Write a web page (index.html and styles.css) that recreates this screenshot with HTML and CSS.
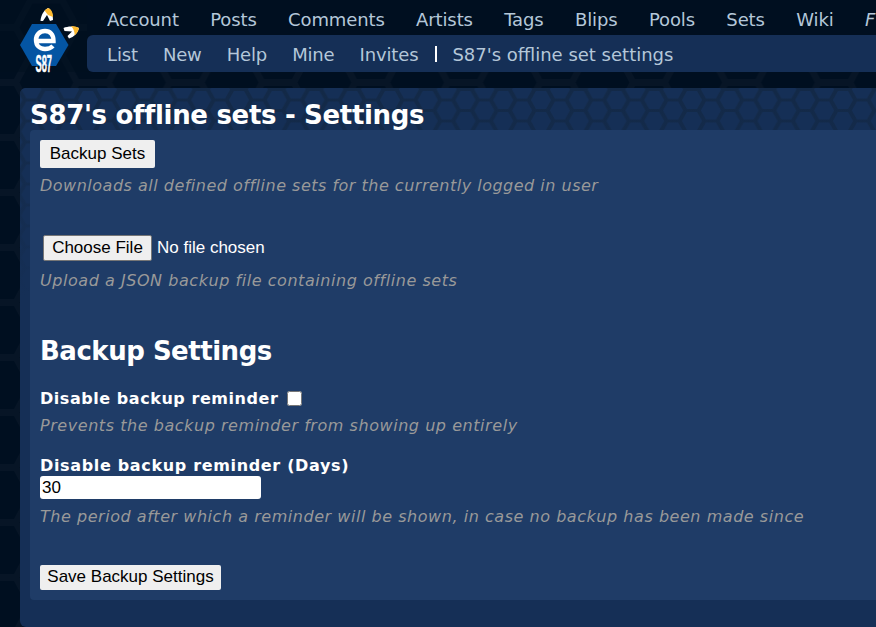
FILE: index.html
```html
<!DOCTYPE html>
<html lang="en">
<head>
<meta charset="utf-8">
<title>Set settings</title>
<link rel="stylesheet" href="styles.css">
</head>
<body>
<svg class="backdrop" width="876" height="627" aria-hidden="true">
  <defs>
    <pattern id="large" width="92.7" height="55" patternUnits="userSpaceOnUse">
      <rect width="93" height="55" fill="#071526"/>
      <g fill="#000f20">
        <path d="M-27 0L-14-24H14L27 0L14 24H-14Z"/>
        <path d="M-27 55L-14 31H14L27 55L14 79H-14ZM65.700 0L78.700-24H106.700L119.700 0L106.700 24H78.700ZM65.700 55L78.700 31H106.700L119.700 55L106.700 79H78.700Z"/>
        <path d="M19.300 27.500L32.300 3.500H60.300L73.300 27.500L60.300 51.500H32.300Z"/>
      </g>
    </pattern>
  </defs>
  <rect width="876" height="627" fill="url(#large)"/>
</svg>
<header class="top">
  <a class="logo">
    <svg width="60" height="70" viewBox="20 5 60 70">
      <path fill="#0455a3" d="M20 45L32 24H56L68.500 45L56 66H32Z"/>
      <path fill="#fff" d="M40.500 21C41 15 44 10 48 8C51 9 53 14 53 20L50 21L47 15L43 21Z"/>
      <path fill="#fdb92e" d="M44.500 10.500L48 8C51.500 9 53 13 53 17L48 15Z"/>
      <path fill="#fff" d="M63.500 28C68 26 74 26 79 28C78 33 74 37 69 38.500L67.500 36L72 31.500L64.500 31Z"/>
      <path fill="#fdb92e" d="M71 26Q76 26 79 28Q78 33 74.500 35.500Q75 30 71 26Z"/>
      <path fill="none" stroke="#fff" stroke-width="4.400" d="M36 41H53.500C53.500 34.500 50 31 45 31C39.500 31 36 35 36 40C36 45.500 39.500 49 45 49Q50 49 53 46"/>
      <text class="logo-name" x="35.500" y="71.500" textLength="16.500" lengthAdjust="spacingAndGlyphs">S87</text>
    </svg>
  </a>
  <nav class="menus">
    <div class="main-nav"><a>Account</a><a>Posts</a><a>Comments</a><a>Artists</a><a>Tags</a><a>Blips</a><a>Pools</a><a>Sets</a><a>Wiki</a><a><i>F</i></a></div>
    <div class="sub-nav"><a>List</a><a>New</a><a>Help</a><a>Mine</a><a>Invites</a><b class="divider"></b><a>S87's offline set settings</a></div>
  </nav>
</header>
<main class="page">
  <svg class="page-pattern" width="856" height="210" aria-hidden="true">
    <defs>
      <pattern id="small" width="37.75" height="21" patternUnits="userSpaceOnUse" patternTransform="translate(30.250 12)">
        <rect width="38" height="21" fill="#132947"/>
        <g fill="#152f56">
          <path d="M-10 0L-5-9H5L10 0L5 9H-5ZM-10 21L-5 12H5L10 21L5 30H-5ZM27.750 0L32.750-9H42.750L47.750 0L42.750 9H32.750ZM27.750 21L32.750 12H42.750L47.750 21L42.750 30H32.750ZM8.900 10.500L13.900 1.500H23.900L28.900 10.500L23.900 19.500H13.900Z"/>
        </g>
      </pattern>
      <linearGradient id="fade" x2="0" y2="1"><stop stop-color="#152f56" stop-opacity="0"/><stop offset="1" stop-color="#152f56"/></linearGradient>
    </defs>
    <rect width="856" height="210" fill="url(#small)"/>
    <rect width="856" height="210" fill="url(#fade)"/>
  </svg>
  <h1>S87's offline sets - Settings</h1>
  <section class="panel">
    <button class="backup">Backup Sets</button>
    <p class="hint hint-backup">Downloads all defined offline sets for the currently logged in user</p>
    <div class="upload"><button class="choose">Choose File</button><span>No file chosen</span></div>
    <p class="hint hint-upload">Upload a JSON backup file containing offline sets</p>
    <h2>Backup Settings</h2>
    <label class="check-row"><span>Disable backup reminder</span><input type="checkbox"></label>
    <p class="hint hint-check">Prevents the backup reminder from showing up entirely</p>
    <label class="days-label">Disable backup reminder (Days)</label>
    <input class="days" type="text" value="30">
    <p class="hint hint-days">The period after which a reminder will be shown, in case no backup has been made since</p>
    <button class="save">Save Backup Settings</button>
  </section>
</main>
</body>
</html>
```
FILE: styles.css
```css
* { box-sizing: border-box; }
body { margin: 0; width: 876px; height: 627px; overflow: hidden; background: #000f20; color: #fff; font-family: Verdana, "DejaVu Sans", sans-serif; font-size: 17px; }
.backdrop { position: absolute; inset: 0; z-index: -1; }
.top { display: flex; height: 72px; background: rgba(0, 15, 32, 0.45); }
.logo { width: 87px; padding: 5px 0 0 20px; flex: none; }
.logo svg { display: block; }
.logo-name { font: bold 23px "Liberation Sans", sans-serif; fill: #fff; stroke: #fff; stroke-width: 0.5px; }
.menus { width: 789px; overflow: hidden; }
.main-nav, .sub-nav { display: flex; white-space: nowrap; color: #b4c7d9; font-size: 18px; letter-spacing: -0.12px; }
.main-nav { height: 35px; background: #000f20; padding-left: 20px; gap: 31.400px; line-height: 40px; }
.sub-nav { height: 37px; background: #152f56; padding-left: 20px; gap: 25px; line-height: 39px; border-radius: 6px 0 0 6px; }
.sub-nav a:nth-child(-n+5) { letter-spacing: -0.15px; }
.sub-nav a:last-child { letter-spacing: 0; }
.divider { width: 2px; height: 16px; margin: 11px -10px 0 -8px; background: #fff; }
.page { position: relative; margin: 16px 0 0 20px; height: 539px; background: #152f56; border-radius: 6px 0 0 6px; padding: 10px 0 0 10px; overflow: hidden; }
.page-pattern { position: absolute; left: 0; top: 0; }
h1, .panel { position: relative; }
h1, h2 { margin: 0; font-size: 26px; line-height: 34px; height: 32px; letter-spacing: -0.32px; white-space: nowrap; }
.panel { height: 470px; background: #1f3c67; border-radius: 4px 0 0 4px; padding: 10px 0 0 10px; }
button { display: block; border: 0; border-radius: 2px; background: #efefef; color: #000; padding: 0; font: 17px "Liberation Sans", sans-serif; white-space: nowrap; }
.backup { width: 115px; height: 28px; }
.hint { margin: 0; height: 20px; line-height: 22px; font-size: 16px; letter-spacing: 0.5px; font-style: italic; color: #999; white-space: nowrap; }
.hint-backup { margin-top: 7px; }
.upload { display: flex; align-items: center; gap: 5px; margin: 40px 0 0 3px; height: 26px; font-family: "Liberation Sans", sans-serif; }
.choose { width: 109px; height: 26px; border: 1px solid #767676; }
.hint-upload { margin-top: 9px; letter-spacing: 0.55px; }
h2 { margin-top: 44px; letter-spacing: -0.48px; }
.check-row { display: flex; align-items: center; height: 20px; margin-top: 22px; font-size: 16px; font-weight: bold; letter-spacing: 0.55px; }
.check-row input { width: 15px; height: 15px; margin: 1px 0 0 9px; }
.hint-check { margin-top: 7px; letter-spacing: 0.55px; }
.days-label { display: block; height: 21px; line-height: 22px; margin-top: 20px; font-size: 16px; font-weight: bold; letter-spacing: 0.66px; }
.days { display: block; width: 221px; height: 23px; border: 0; border-radius: 3px; padding: 1px 2px; font: 17px "Liberation Sans", sans-serif; background: #fff; color: #000; }
.hint-days { margin-top: 7px; letter-spacing: 0.54px; }
.save { width: 181px; height: 25px; margin-top: 39px; padding-bottom: 2px; }
```
